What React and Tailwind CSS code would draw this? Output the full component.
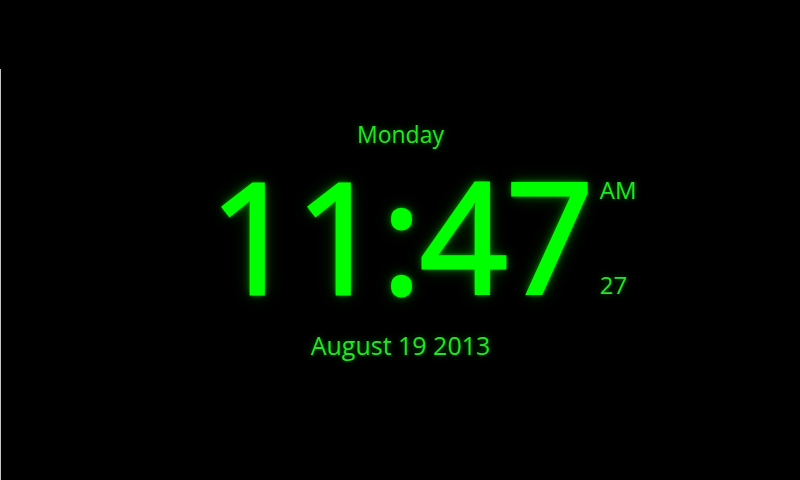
export default function App() {
  const font = { fontFamily: '"Open Sans", "Noto Sans", sans-serif' };
  return (
    <div className="w-[800px] h-[480px] bg-black flex flex-col overflow-hidden" style={font}>
      <div className="h-[69px] shrink-0" />
      <div className="flex-1 border-l border-[#c4c4c4] flex flex-col items-center pt-[50px]">
        <div className="text-[23px] leading-[30px] text-[#22e622] [text-shadow:0_0_6px_rgba(0,200,0,0.5)]">
          Monday
        </div>
        <div className="grid grid-cols-[1fr_auto_1fr] w-full mt-[5px]">
          <div />
          <div className="text-[154px] leading-[160px] text-[#00ff00] tracking-[-2px] [-webkit-text-stroke:3px_#00ff00] [text-shadow:0_0_4px_rgba(0,255,0,0.8),0_0_10px_rgba(0,200,0,0.6),0_0_18px_rgba(0,150,0,0.45)]">
            11:47
          </div>
          <div className="flex flex-col justify-between pl-[8px] pt-[21px] pb-[14px] text-[24px] leading-[30px] text-[#22e622] [text-shadow:0_0_6px_rgba(0,200,0,0.5)]">
            <span>AM</span>
            <span>27</span>
          </div>
        </div>
        <div className="mt-[15px] text-[25px] leading-[32px] text-[#22e622] [text-shadow:0_0_6px_rgba(0,200,0,0.5)]">
          August 19 2013
        </div>
      </div>
    </div>
  );
}
